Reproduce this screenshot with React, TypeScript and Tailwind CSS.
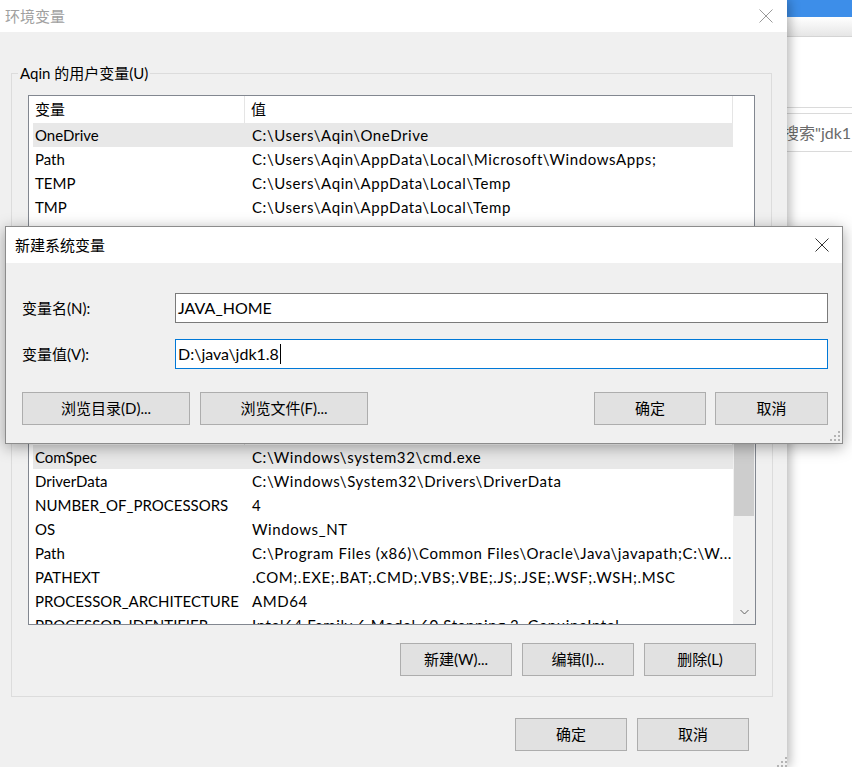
import clsx from "clsx";

type Row = [string, string];

const userRows: Row[] = [
  ["OneDrive", String.raw`C:\Users\Aqin\OneDrive`],
  ["Path", String.raw`C:\Users\Aqin\AppData\Local\Microsoft\WindowsApps;`],
  ["TEMP", String.raw`C:\Users\Aqin\AppData\Local\Temp`],
  ["TMP", String.raw`C:\Users\Aqin\AppData\Local\Temp`],
];

const sysRows: Row[] = [
  ["ComSpec", String.raw`C:\Windows\system32\cmd.exe`],
  ["DriverData", String.raw`C:\Windows\System32\Drivers\DriverData`],
  ["NUMBER_OF_PROCESSORS", "4"],
  ["OS", "Windows_NT"],
  ["Path", String.raw`C:\Program Files (x86)\Common Files\Oracle\Java\javapath;C:\W...`],
  ["PATHEXT", ".COM;.EXE;.BAT;.CMD;.VBS;.VBE;.JS;.JSE;.WSF;.WSH;.MSC"],
  ["PROCESSOR_ARCHITECTURE", "AMD64"],
  ["PROCESSOR_IDENTIFIER", "Intel64 Family 6 Model 60 Stepping 3, GenuineIntel"],
];

function CloseX({ className }: { className: string }) {
  return (
    <svg width="14" height="14" viewBox="0 0 14 14" className={className}>
      <path d="M0.5 0.5L13.5 13.5M13.5 0.5L0.5 13.5" stroke="currentColor" strokeWidth="1" fill="none" />
    </svg>
  );
}

// size grip in the bottom right corner
function Grip() {
  return (
    <svg width="10" height="10" viewBox="0 0 10 10" className="text-[#b4b4b4]">
      <rect x="8" y="0" width="2" height="2" fill="currentColor" />
      <rect x="4" y="4" width="2" height="2" fill="currentColor" />
      <rect x="8" y="4" width="2" height="2" fill="currentColor" />
      <rect x="0" y="8" width="2" height="2" fill="currentColor" />
      <rect x="4" y="8" width="2" height="2" fill="currentColor" />
      <rect x="8" y="8" width="2" height="2" fill="currentColor" />
    </svg>
  );
}

function Btn({ label, w }: { label: string; w: string }) {
  return (
    <div className={clsx(w, "flex h-[33px] items-center justify-center border border-[#adadad] bg-[#e1e1e1]")}>
      {label}
    </div>
  );
}

function Scrollbar() {
  return (
    <div className="flex w-[22px] flex-col bg-[#f0f0f0]">
      <div className="flex h-[17px] items-center justify-center">
        <svg width="9" height="6" viewBox="0 0 9 6" className="text-[#606060]">
          <path d="M0.5 5L4.5 1L8.5 5" stroke="currentColor" fill="none" />
        </svg>
      </div>
      <div className="flex-1 px-[1px]">
        <div className="h-[81px] bg-[#cdcdcd]" />
      </div>
      <div className="flex h-[24px] items-center justify-center">
        <svg width="9" height="6" viewBox="0 0 9 6" className="text-[#606060]">
          <path d="M0.5 1L4.5 5L8.5 1" stroke="currentColor" fill="none" />
        </svg>
      </div>
    </div>
  );
}

function VarList({ rows, scrollbar }: { rows: Row[]; scrollbar?: boolean }) {
  return (
    <div className="mx-[16px] flex h-[208px] overflow-hidden border border-[#828790] bg-white">
      <div className="w-[704px] shrink-0">
        <div className="flex h-[27px]">
          <span className="flex w-[216px] items-center border-r border-[#e5e5e5] pl-[6px]">变量</span>
          <span className="flex flex-1 items-center border-r border-[#e5e5e5] pl-[6px]">值</span>
        </div>
        {rows.map(([k, v], i) => (
          <div
            key={k + i}
            className={clsx("ml-[4px] flex h-[24px] items-center whitespace-nowrap", i === 0 && "bg-[#e8e8e8]")}
          >
            <span className="w-[212px] shrink-0 overflow-hidden pl-[2px]">{k}</span>
            <span className="flex-1 overflow-hidden pl-[7px] tracking-[0.6px]">{v}</span>
          </div>
        ))}
      </div>
      {scrollbar ? <Scrollbar /> : <div className="flex-1" />}
    </div>
  );
}

function GroupBox({ title, rows, scrollbar }: { title: string; rows: Row[]; scrollbar?: boolean }) {
  return (
    <fieldset className="border border-[#dcdcdc] pb-[20px]">
      <legend className="ml-[6px] px-[2px] leading-[20px]">{title}</legend>
      <div className="mt-[12px]">
        <VarList rows={rows} scrollbar={scrollbar} />
      </div>
      <div className="mt-[18px] mr-[16px] flex justify-end gap-[10px]">
        <Btn label="新建(W)..." w="w-[112px]" />
        <Btn label="编辑(I)..." w="w-[112px]" />
        <Btn label="删除(L)" w="w-[112px]" />
      </div>
    </fieldset>
  );
}

function EnvDialog() {
  return (
    <div className="relative z-10 flex w-[787px] shrink-0 flex-col bg-[#f0f0f0] shadow-[3px_0_10px_rgba(0,0,0,0.28)]">
      <div className="flex h-[32px] shrink-0 items-center justify-between bg-white pl-[5px] pr-[14px]">
        <span className="text-[#a0a0a0]">环境变量</span>
        <CloseX className="text-[#9a9a9a]" />
      </div>
      <div className="flex flex-1 flex-col pl-[11px] pr-[15px]">
        <div className="mt-[31px]">
          <GroupBox title="Aqin 的用户变量(U)" rows={userRows} />
        </div>
        <div className="mt-[10px]">
          <GroupBox title="系统变量(S)" rows={sysRows} scrollbar />
        </div>
        <div className="mt-[21px] mr-[23px] flex justify-end gap-[10px]">
          <Btn label="确定" w="w-[112px]" />
          <Btn label="取消" w="w-[112px]" />
        </div>
      </div>
      <div className="absolute right-0 bottom-0">
        <Grip />
      </div>
    </div>
  );
}

function SideWindow() {
  return (
    <div className="flex flex-1 flex-col overflow-hidden bg-white">
      <div className="h-[17px] shrink-0 bg-[#3d8ee9]" />
      <div className="h-[20px] shrink-0 border-b border-[#d4d4d4] bg-gradient-to-b from-white to-[#e6e6e6]" />
      <div className="mt-[70px] border-t border-[#dadada]" />
      <div className="mt-[5px] flex h-[39px] items-center border-y border-[#dadada]">
        <span className="-ml-[4px] whitespace-nowrap text-[16px] text-[#6a6a6a]">{'搜索"jdk1'}</span>
      </div>
    </div>
  );
}

function NewVarDialog() {
  return (
    <div className="absolute top-[226px] left-[5px] z-20 flex h-[218px] w-[838px] flex-col border border-[#8c8c8c] bg-[#f0f0f0] shadow-[0_3px_14px_rgba(0,0,0,0.35)]">
      <div className="flex h-[36px] shrink-0 items-center justify-between bg-white pl-[9px] pr-[13px]">
        <span>新建系统变量</span>
        <CloseX className="text-[#333]" />
      </div>
      <div className="flex flex-col pl-[16px] pr-[14px]">
        <div className="mt-[30px] flex items-center">
          <span className="w-[153px] shrink-0">变量名(N):</span>
          <div className="flex h-[30px] flex-1 items-center border border-[#7a7a7a] bg-white pl-[2px] text-[16px]">
            JAVA_HOME
          </div>
        </div>
        <div className="mt-[16px] flex items-center">
          <span className="w-[153px] shrink-0">变量值(V):</span>
          <div className="flex h-[30px] flex-1 items-center border border-[#0078d7] bg-white pl-[2px] text-[16px]">
            {String.raw`D:\java\jdk1.8`}
            <span className="ml-[1px] h-[20px] border-l border-black" />
          </div>
        </div>
        <div className="mt-[23px] flex items-center">
          <div className="flex gap-[10px]">
            <Btn label="浏览目录(D)..." w="w-[168px]" />
            <Btn label="浏览文件(F)..." w="w-[168px]" />
          </div>
          <div className="ml-auto flex gap-[9px]">
            <Btn label="确定" w="w-[112px]" />
            <Btn label="取消" w="w-[113px]" />
          </div>
        </div>
      </div>
      <div className="absolute right-[2px] bottom-[2px]">
        <Grip />
      </div>
    </div>
  );
}

export default function App() {
  return (
    <div className="relative flex h-[767px] w-[852px] overflow-hidden bg-white font-['Lato','Noto_Sans_CJK_SC',sans-serif] text-[15px] text-black">
      <EnvDialog />
      <SideWindow />
      <NewVarDialog />
    </div>
  );
}
